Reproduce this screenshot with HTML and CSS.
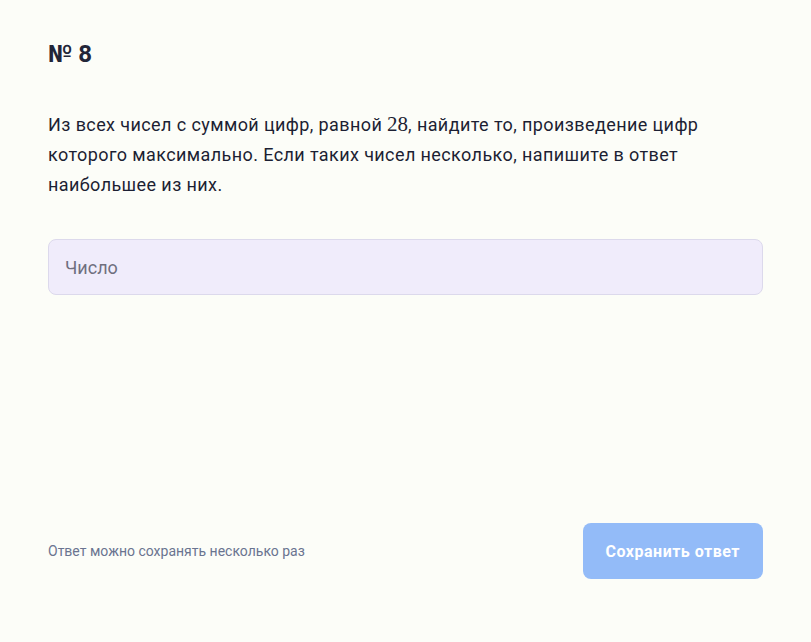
FILE: index.html
```html
<!DOCTYPE html>
<html lang="ru">
<head>
<meta charset="utf-8">
<title>№ 8</title>
<link rel="stylesheet" href="styles.css">
</head>
<body>
<main class="task">
  <h1 class="task-title">№ 8</h1>
  <p class="task-text">Из всех чисел с суммой цифр, равной <span class="math">28</span>, найдите то, произведение цифр которого максимально. Если таких чисел несколько, напишите в ответ наибольшее из них.</p>
  <input class="answer-input" type="text" placeholder="Число">
  <div class="task-footer">
    <span class="hint">Ответ можно сохранять несколько раз</span>
    <button class="save-btn" type="button">Сохранить ответ</button>
  </div>
</main>
</body>
</html>
```

FILE: styles.css
```css
* { box-sizing: border-box; }
html, body {
  margin: 0;
  height: 100%;
  background: #fcfdf8;
}
body {
  font-family: Roboto, "Liberation Sans", sans-serif;
  color: #1f2236;
}
.task {
  height: 100%;
  padding: 40px 48px 63px;
  display: flex;
  flex-direction: column;
}
.task-title {
  margin: 0;
  font-size: 24px;
  line-height: 28px;
  font-weight: 700;
  color: #222638;
}
.task-text {
  margin: 41px 0 0;
  font-size: 18px;
  letter-spacing: 0.4px;
  line-height: 30px;
  font-weight: 400;
  color: #1c1f33;
}
.math {
  font-family: "Liberation Serif", "DejaVu Serif", serif;
  font-size: 21px;
  font-weight: 400;
  letter-spacing: 0;
}
.answer-input {
  margin-top: 39px;
  width: 100%;
  height: 56px;
  border: 1px solid #dcd9ec;
  border-radius: 8px;
  background: #f0ecfb;
  padding: 0 16px;
  font-family: Roboto, "Liberation Sans", sans-serif;
  font-size: 18px;
  color: #23263a;
  outline: none;
}
.answer-input::placeholder {
  color: #6f6f7e;
}
.task-footer {
  margin-top: auto;
  display: flex;
  align-items: center;
  justify-content: space-between;
}
.hint {
  font-size: 14px;
  color: #6a7490;
}
.save-btn {
  height: 56px;
  padding: 0 23px;
  border: none;
  border-radius: 8px;
  background: #93bbf8;
  color: #ffffff;
  font-family: Roboto, "Liberation Sans", sans-serif;
  font-size: 16px;
  letter-spacing: 0.5px;
  font-weight: 700;
}
```
